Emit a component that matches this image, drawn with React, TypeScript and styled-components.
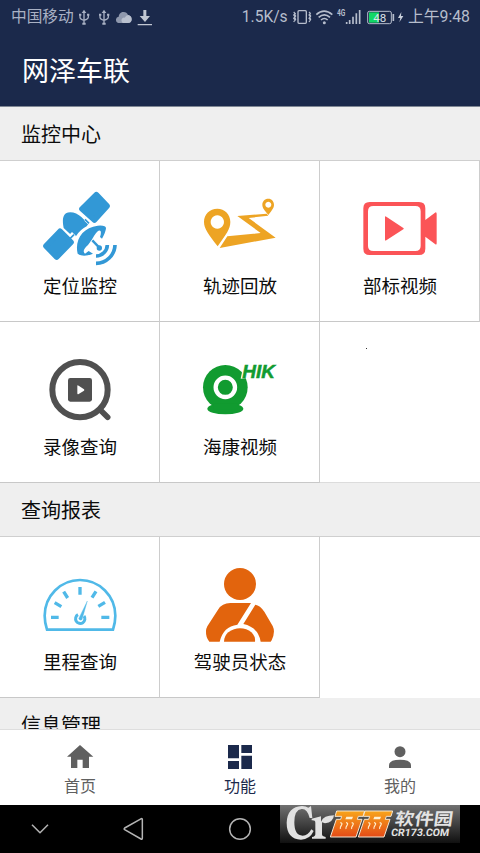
import React from 'react';
import styled, { createGlobalStyle } from 'styled-components';

const Global = createGlobalStyle`
  *, *::before, *::after { box-sizing: border-box; }
  body { margin: 0; background: #000; }
  svg { display: block; flex: none; }
`;

const Screen = styled.div`
  width: 480px;
  height: 853px;
  display: flex;
  flex-direction: column;
  overflow: hidden;
  font-family: 'Noto Sans CJK SC', 'Noto Sans', sans-serif;
  color: #0c0c0c;
  background: #fff;
`;

const Header = styled.header`
  height: 107px;
  flex: none;
  background: #1b294b;
  border-bottom: 1px solid #7f8794;
`;

const StatusBar = styled.div`
  height: 33px;
  padding: 0 10px 0 11px;
  display: flex;
  align-items: center;
  color: #a9b1c4;
  font-family: Roboto, 'Noto Sans CJK SC', sans-serif;
`;

const Carrier = styled.span`
  width: 64px;
  font-size: 15.7px;
  line-height: 33px;
  white-space: nowrap;
`;

const Speed = styled.span`
  width: 52px;
  margin-left: 89px;
  font-size: 15.6px;
  line-height: 34px;
  white-space: nowrap;
  color: #b6bdcc;
`;

const Clock = styled.span`
  margin-left: 1px;
  font-size: 15.8px;
  line-height: 33px;
  white-space: nowrap;
  color: #b6bdcc;
`;

const Title = styled.h1`
  margin: 0;
  padding: 18px 0 0 22px;
  font-size: 27px;
  line-height: 38px;
  font-weight: 400;
  color: #fff;
`;

const Content = styled.main`
  height: 622px;
  flex: none;
  overflow: hidden;
`;

const SectionTitle = styled.h2`
  margin: 0;
  height: 54px;
  padding-left: 21px;
  background: #efefef;
  border-bottom: 1px solid #cfcfcf;
  font-size: 20px;
  line-height: 54px;
  font-weight: 400;
`;

const Grid = styled.div`
  display: grid;
  grid-template-columns: repeat(3, 160px);
  grid-auto-rows: 161px;
`;

const Cell = styled.div`
  display: flex;
  flex-direction: column;
  align-items: center;
  padding-top: 27px;
  border-right: 1px solid #cdcdcd;
  border-bottom: 1px solid #c8c8c8;
`;

const IconBox = styled.svg`
  width: 80px;
  height: 80px;
  margin-left: 1px;
`;

const CellLabel = styled.span`
  margin: 4px 0 0 1px;
  font-size: 18.5px;
  line-height: 26px;
  white-space: nowrap;
`;

const EmptyCell = styled.div`
  padding: 26px 0 0 46px;
  border-bottom: 1px solid #dcdcdc;
`;

const Speck = styled.div`
  width: 1px;
  height: 1px;
  background: #333;
`;

const TabBar = styled.nav`
  height: 76px;
  flex: none;
  display: grid;
  grid-template-columns: repeat(3, 1fr);
  border-top: 1px solid #dedede;
  background: #fff;
`;

const Tab = styled.div<{ $active?: boolean }>`
  display: flex;
  flex-direction: column;
  align-items: center;
  padding-top: 11px;
  font-size: 16px;
  line-height: 24px;
  color: ${p => (p.$active ? '#1b294b' : '#606060')};
`;

const SystemNav = styled.div`
  height: 48px;
  flex: none;
  display: flex;
  background: #000;
`;

const NavButtons = styled.svg`
  width: 280px;
  height: 48px;
`;

const Brand = styled.svg`
  width: 180px;
  height: 38px;
`;

const StatusIcon = styled.svg<{ $gap?: number }>`
  height: 24px;
  margin-left: ${p => p.$gap ?? 0}px;
`;

const Usb = ({ gap }: { gap: number }) => (
  <StatusIcon $gap={gap} width="12" height="24" viewBox="236 12 36 72" fill="none" stroke="#a9b1c4" strokeWidth="4">
    <path d="M254 34V66M242 42V49Q242 55 254 58M267 42V48Q267 54 254 58" />
    <path d="M254 26l7 10h-14zM249 65h10v6h-10zM239 38h7v6h-7zM263 38h7v6h-7z" fill="#a9b1c4" stroke="none" />
  </StatusIcon>
);

const Satellite = () => (
  <IconBox viewBox="120 234 240 240" fill="#3298d6">
    <path d="M289 254L321 288L283 330L246 297ZM180 364L213 397L170 441L138 408Z" stroke="#3298d6" strokeWidth="17" strokeLinejoin="round" />
    <path d="M191 354C187 330 188 318 198 310C210 303 231 308 245 322L265 342L260 349Q242 358 229 377L220 381Z" />
    <path d="M253 332l7-8 11 11-7 8zM208 374l8-8 12 12-8 8z" fill="#fff" />
    <path d="M255 328l12 12M210 386l12-12" stroke="#3298d6" strokeWidth="5" />
    <path d="M233 431C223 390 248 352 293 347Q318 345 318 355Q317 367 306 386L300 381Q304 370 302 364Q297 356 282 378L275 390L264 405Q244 423 255 431L266 423L279 431Q249 444 233 431Z" stroke="#fff" strokeWidth="9" paintOrder="stroke" />
    <path d="M276 391l20 20" stroke="#fff" strokeWidth="13" />
    <path d="M277 391l18 19" stroke="#3298d6" strokeWidth="7" />
    <circle cx="298" cy="414" r="8" />
    <path d="M322 405A34 34 0 0 1 288 438M345 405A57 57 0 0 1 288 460" fill="none" stroke="#3298d6" strokeWidth="11" />
  </IconBox>
);

const Route = () => (
  <IconBox viewBox="120 84 240 240" fill="#eda424">
    <path fillRule="evenodd" d="M172 146C149 146 132 163 132 186C132 207 146 223 173 259C199 222 211 207 211 186C211 163 194 146 172 146ZM172 166A20 20 0 1 1 171.900 166Z" />
    <path fillRule="evenodd" d="M325 116C314 116 307 124 307 134C307 144 313 150 325 165C337 149 342 143 342 134C342 124 335 116 325 116ZM325 125A9 9 0 1 1 324.900 125Z" />
    <path d="M320 161L325 167L266 174L347 233L179 264L202 229L302 219L232 168Z" />
  </IconBox>
);

const VideoCamera = () => (
  <IconBox viewBox="120 84 240 240" fill="#fb5457">
    <path fillRule="evenodd" d="M149 126H297Q316 126 316 145V180L345 158Q350 155 350 162V250Q350 256 345 252L316 230V266Q316 285 297 285H149Q130 285 130 266V145Q130 126 149 126ZM160 138Q144 138 144 154V258Q144 273 160 273H286Q302 273 302 258V154Q302 138 286 138Z" />
    <path d="M195 170Q195 167 199 170L250 204Q253 206 250 208L199 241Q195 243 195 240Z" />
  </IconBox>
);

const RecordSearch = () => (
  <IconBox viewBox="120 87 240 240" fill="#505050">
    <circle cx="240" cy="209" r="83" fill="none" stroke="#505050" strokeWidth="18" />
    <path d="M301 270l22 22" stroke="#505050" strokeWidth="17" strokeLinecap="round" />
    <rect x="204" y="174" width="72" height="71" rx="7" />
    <path d="M232 197Q232 194 236 197L252 208Q254 210 252 212L236 222Q232 224 232 220Z" fill="#fff" />
  </IconBox>
);

const HikCamera = () => (
  <IconBox viewBox="120 87 240 240" fill="#119b30">
    <circle cx="196" cy="202" r="67" />
    <ellipse cx="196" cy="266" rx="54" ry="17" />
    <path d="M160 250h72v18h-72z" />
    <circle cx="196" cy="202" r="29" fill="none" stroke="#fff" strokeWidth="13" />
    <path d="M251 134L242 176L264 174V134Z" fill="#fff" />
    <text x="247" y="174" fontFamily="Liberation Sans, sans-serif" fontWeight="700" fontStyle="italic" fontSize="53" stroke="#119b30" strokeWidth="1.500" textLength="98" lengthAdjust="spacingAndGlyphs">HIK</text>
  </IconBox>
);

const Gauge = () => (
  <IconBox viewBox="120 87 240 240" fill="none" stroke="#50b9e8" strokeWidth="8">
    <path d="M141 284Q134 262 134 242A106 107 0 0 1 346 242Q346 262 339 284Z" />
    <path strokeWidth="10" d="M153 247h23M304 247h24M240 156v23M191 170l12 19M288 169l-12 19M164 203l20 12M315 202l-20 12" />
    <path d="M234 239A14 14 0 1 0 252 243" strokeWidth="9" />
    <path d="M236 251L262 198L246 254Q239 258 236 251Z" fill="#50b9e8" strokeWidth="1" />
  </IconBox>
);

const Driver = () => (
  <IconBox viewBox="120 87 240 240" fill="#e2640d">
    <circle cx="240" cy="147" r="48" />
    <path d="M273 204L232 269Q190 274 179 320H148Q137 307 138 288Q138 282 142 274L174 224Q186 204 211 204Z" />
    <path d="M286 209Q300 211 313 230L338 273Q347 291 335 316L332 320H302Q295 277 250 267Z" />
    <path d="M192 320Q193 302 205 292Q222 280 240 280Q260 280 274 292Q287 304 285 320Z" />
  </IconBox>
);

const App = () => (
  <>
    <Global />
    <Screen>
      <Header>
        <StatusBar>
          <Carrier>中国移动</Carrier>
          <Usb gap={4} />
          <Usb gap={8} />
          <StatusIcon $gap={5} width="18" height="24" viewBox="348 12 54 72">
            <path d="M358 66Q350 64 351 55Q352 48 359 47Q360 36 370 33Q383 31 387 42Q398 44 398 55Q398 66 387 66Z" fill="#8f98ad" />
            <path d="M371 66Q365 62 368 54Q372 48 377 50Q381 42 388 42Q398 45 398 55Q398 66 387 66Z" fill="#b9c0ce" />
          </StatusIcon>
          <StatusIcon $gap={4} width="16" height="24" viewBox="411 12 48 72" fill="#c1c7d3">
            <path d="M430 27h9v18h11l-15 18-16-18h11zM413 69h43v4h-43z" />
          </StatusIcon>
          <Speed>1.5K/s</Speed>
          <StatusIcon width="115" height="24" viewBox="156 12 345 72" fill="none" stroke="#b6bdcc" strokeWidth="4">
            <rect x="174" y="29" width="25" height="38" rx="3" />
            <path d="M161 33l4 4-4 5 4 5-4 5 4 5-4 6M167 36l-3 4 3 5-3 5 3 5-3 5M207 33l4 4-4 5 4 5-4 5 4 5-4 6M212 36l-3 4 3 5-3 5 3 5-3 5" strokeWidth="3.500" />
            <path d="M229 41Q252 20 277 41M236 49Q253 34 270 49M243 57Q253 48 263 57" strokeWidth="5" />
            <circle cx="253" cy="65" r="4.500" fill="#b6bdcc" stroke="none" />
            <text x="291" y="46" fontSize="25" fontWeight="700" fontFamily="Roboto, sans-serif" fill="#b6bdcc" stroke="none" textLength="25" lengthAdjust="spacingAndGlyphs">4G</text>
            <path d="M320 63v6M329 57v12M339 47v22M349 37v32M359 27v42" strokeWidth="5" />
            <rect x="383" y="31" width="71" height="37" rx="5" strokeWidth="3" />
            <path d="M387 34h30v31h-30z" fill="#12d765" stroke="none" />
            <text x="400" y="62" fontSize="34" fontFamily="Roboto, sans-serif" fill="#dce1e8" stroke="none" textLength="39" lengthAdjust="spacingAndGlyphs">48</text>
            <path d="M460 39v21" strokeWidth="5" />
            <path d="M484 33l-10 18h7l-3 13 12-19h-7z" fill="#cbd1dc" stroke="none" />
          </StatusIcon>
          <Clock>上午9:48</Clock>
        </StatusBar>
        <Title>网泽车联</Title>
      </Header>

      <Content>
        <SectionTitle>监控中心</SectionTitle>
        <Grid>
          <Cell><Satellite /><CellLabel>定位监控</CellLabel></Cell>
          <Cell><Route /><CellLabel>轨迹回放</CellLabel></Cell>
          <Cell><VideoCamera /><CellLabel>部标视频</CellLabel></Cell>
          <Cell><RecordSearch /><CellLabel>录像查询</CellLabel></Cell>
          <Cell><HikCamera /><CellLabel>海康视频</CellLabel></Cell>
          <EmptyCell><Speck /></EmptyCell>
        </Grid>
        <SectionTitle>查询报表</SectionTitle>
        <Grid>
          <Cell><Gauge /><CellLabel>里程查询</CellLabel></Cell>
          <Cell><Driver /><CellLabel>驾驶员状态</CellLabel></Cell>
        </Grid>
        <SectionTitle>信息管理</SectionTitle>
      </Content>

      <TabBar>
        <Tab>
          <svg width="32" height="32" viewBox="192 153 96 96" fill="#606060">
            <path d="M240 165l40 35h-13v34h-19v-25h-16v25h-19v-34h-12z" />
          </svg>
          <span>首页</span>
        </Tab>
        <Tab $active>
          <svg width="32" height="32" viewBox="672 153 96 96" fill="#1b294b">
            <path d="M684 165h33v40h-33zM724 165h32v24h-32zM684 213h33v24h-33zM724 197h32v40h-32z" />
          </svg>
          <span>功能</span>
        </Tab>
        <Tab>
          <svg width="32" height="32" viewBox="342 153 96 96" fill="#606060">
            <circle cx="390" cy="185" r="16.500" />
            <path d="M357 234v-8Q357 209 390 209Q423 209 423 226v8z" />
          </svg>
          <span>我的</span>
        </Tab>
      </TabBar>

      <SystemNav>
        <NavButtons viewBox="0 345 840 144" fill="none" stroke="#b4b4b4" strokeWidth="4.500" strokeLinejoin="round">
          <path d="M96 404l24 24 24-24" />
          <path d="M424 386Q427 385 427 389V444Q427 449 423 447L374 419Q371 417 374 414Z" />
          <circle cx="720" cy="417" r="31" />
        </NavButtons>
        <Brand viewBox="30 345 540 114">
          <defs>
            <linearGradient id="plate" x1="0" y1="0" x2="0" y2="1">
              <stop offset="0" stopColor="#717171" />
              <stop offset="1" stopColor="#101010" />
            </linearGradient>
            <linearGradient id="flame" x1="0" y1="0" x2="0" y2="1">
              <stop offset="0" stopColor="#f8a51b" />
              <stop offset="1" stopColor="#e44b17" />
            </linearGradient>
          </defs>
          <path d="M30 345h540v114h-540z" fill="url(#plate)" />
          <path d="M123 348L127 384H119Q112 356 95 357Q73 359 73 397Q73 437 98 437Q114 437 124 418L131 423Q119 449 93 449Q50 447 50 398Q52 350 96 348Q108 348 115 353Z" fill="#e1e1e1" />
          <path d="M125 386L153 379V395Q161 376 192 376Q190 397 165 400L156 397V433Q156 439 167 441V446H126V441Q136 440 136 433V398Q136 390 125 391Z" fill="#e1e1e1" />
          <g fill="url(#flame)" stroke="#f4e6d1" strokeWidth="3">
            <path d="M200 363H284L279 379H265L262 388H276L258 441H181L199 388H212L215 379H195Z" />
            <path d="M285 363H368L363 379H349L346 388H360L342 441H265L283 388H296L299 379H280Z" />
          </g>
          <path d="M229 380h20l-3 8h-20zM313 380h20l-3 8h-20z" fill="#fff0d0" />
          <g fill="none" stroke="#fff0d0" strokeWidth="3.500">
            <path d="M211 398q8 1 3 8t-3 11M228 398q8 1 3 8t-3 11M245 398q8 1 3 8t-3 11M295 398q8 1 3 8t-3 11M312 398q8 1 3 8t-3 11M329 398q8 1 3 8t-3 11" />
          </g>
          <g fill="#e3e3e3" transform="skewX(-8)">
            <text x="430" y="406" fontFamily="'Noto Sans CJK SC', sans-serif" fontWeight="700" fontSize="51" textLength="174" lengthAdjust="spacingAndGlyphs">软件园</text>
            <text x="424" y="439" fontFamily="Roboto, sans-serif" fontWeight="700" fontSize="31" textLength="174" lengthAdjust="spacingAndGlyphs">CR173.COM</text>
          </g>
        </Brand>
      </SystemNav>
    </Screen>
  </>
);

export default App;
